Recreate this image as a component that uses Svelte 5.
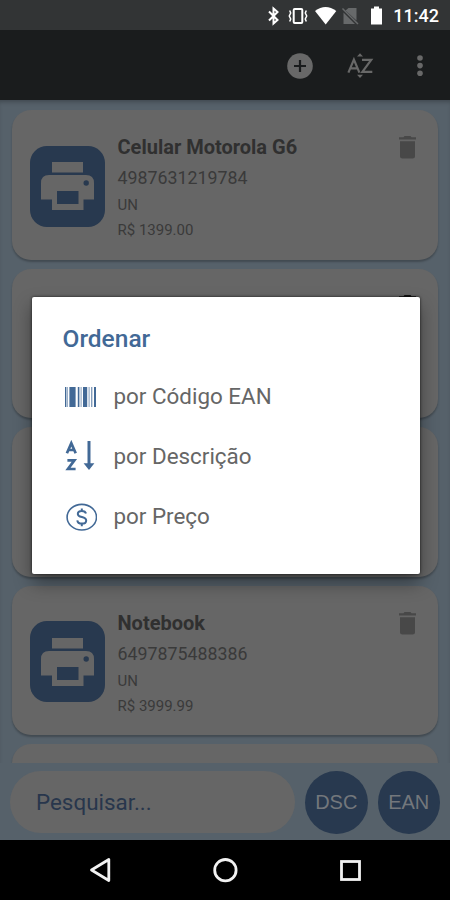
<script>
  const products = [
    { name: "Celular Motorola G6", ean: "4987631219784", unit: "UN", price: 1399 },
    { active: true },
    { active: true },
    { name: "Notebook", ean: "6497875488386", unit: "UN", price: 3999.99 },
    {},
  ];
  const options = [
    { icon: "ean", label: "por Código EAN" },
    { icon: "az", label: "por Descrição" },
    { icon: "price", label: "por Preço" },
  ];
  const brl = (v) => "R$ " + v.toFixed(2);
</script>

<div class="screen">
  <div class="status">
    <svg width="118" height="30" viewBox="0 0 118 30">
      <g fill="none" stroke="#fff" stroke-width="2">
        <path d="M2 11.5L10.5 20L6.5 23.5V8.5L10.5 12L2 20.5" />
        <rect x="26.7" y="9" width="8.6" height="14" rx="1" />
        <path d="M22.7 10.5L23.7 13L22.3 16L23.7 19L22.7 21.5M39.3 10.5L38.3 13L39.7 16L38.3 19L39.3 21.5" stroke-width="1.5" />
      </g>
      <path d="M48 11Q58.5 3 69.3 11L58.7 24.5Z" fill="#fff" />
      <path d="M81.5 8H89.5V20.5L78.5 10.5ZM76.5 12.5L88 24H76.5Z" fill="#67696a" />
      <path d="M75.5 8.5L91 24" stroke="#67696a" stroke-width="1.5" />
      <path d="M107 6.5H112V8.5H115V24.5H104V8.5H107Z" fill="#fff" />
    </svg>
    <span class="clock">11:42</span>
  </div>

  <div class="appbar">
    <svg width="28" height="28" viewBox="0 0 28 28">
      <circle cx="14" cy="14" r="12.8" fill="#686868" />
      <path d="M14 8V20M8 14H20" stroke="#1a1c1d" stroke-width="2.2" />
    </svg>
    <svg class="sort" width="28" height="28" viewBox="0 0 28 28">
      <path d="M11 4.4L14 1.2L17 4.4ZM11 22.7L14 25.9L17 22.7Z" fill="#686868" />
      <path d="M2.4 20.6L7.9 7.6L13.4 20.6M4 16.4H11.6M16 7.9H25.2L16.4 19.8H26.3" fill="none" stroke="#686868" stroke-width="2.2" />
    </svg>
    <svg class="more" width="8" height="24" viewBox="0 0 8 24">
      <g fill="#686868"><circle cx="4" cy="4" r="2.8" /><circle cx="4" cy="11.6" r="2.8" /><circle cx="4" cy="19.2" r="2.8" /></g>
    </svg>
  </div>

  <div class="list">
    {#each products as p}
      <div class="card">
        {#if p.name}
          <div class="thumb">
            <svg width="53" height="48" viewBox="0 0 53 48">
              <path d="M11 0H42V10.5H11Z" fill="#666" />
              <path d="M8 13H45Q53 13 53 21V37.5H42.5V48H11V37.5H0V21Q0 13 8 13Z" fill="#666" />
              <rect x="16" y="29" width="21.5" height="13" fill="#28394f" />
              <circle cx="45.2" cy="21" r="2.7" fill="#28394f" />
            </svg>
          </div>
          <div class="info">
            <div class="name">{p.name}</div>
            <div class="ean">{p.ean}</div>
            <div class="unit">{p.unit}</div>
            <div class="price">{brl(p.price)}</div>
          </div>
        {/if}
        {#if p.name || p.active}
          <svg class="trash" class:active={p.active} width="17" height="23" viewBox="0 0 17 23">
            <path d="M0 1.2H4.5L5.5 0H11.5L12.5 1.2H17V3.6H0ZM1 5.2H16V20Q16 22.5 13.5 22.5H3.5Q1 22.5 1 20Z" />
          </svg>
        {/if}
      </div>
    {/each}
  </div>

  <div class="search">
    <div class="field">Pesquisar...</div>
    <div class="round">DSC</div>
    <div class="round">EAN</div>
  </div>

  <div class="nav">
    <svg width="22" height="26" viewBox="0 0 22 26"><path d="M2.5 13L19.8 2.5V23.5Z" fill="none" stroke="#f2f2f2" stroke-width="2.8" stroke-linejoin="round" /></svg>
    <svg width="26" height="26" viewBox="0 0 26 26"><circle cx="13.4" cy="13.2" r="10.7" fill="none" stroke="#f2f2f2" stroke-width="2.8" /></svg>
    <svg width="22" height="26" viewBox="0 0 22 26"><rect x="2.5" y="4.5" width="18" height="18" fill="none" stroke="#f2f2f2" stroke-width="2.8" /></svg>
  </div>

  <div class="dialog">
    <h2>Ordenar</h2>
    {#each options as o}
      <div class="option">
        {#if o.icon === "ean"}
          <svg width="34" height="34" viewBox="0 0 34 34" fill="#426996">
            <path d="M2 7H3.4V27H2ZM6.4 7H12.6V27H6.4ZM14.8 7H16.4V27H14.8ZM20 7H24.2V27H20ZM31 7H33V27H31Z" />
            <path d="M4.2 7H5V27H4.2ZM17.6 7H18.6V27H17.6ZM25.6 7H26.6V27H25.6ZM28 7H29.4V27H28Z" opacity=".65" />
          </svg>
        {:else if o.icon === "az"}
          <svg width="34" height="34" viewBox="0 0 34 34" fill="none" stroke="#426996">
            <path d="M3.9 13.2L8.3 3.2L12.7 13.2M5.5 10H11.1M4.4 20.3H11.4L5 29H12.6" stroke-width="2.7" />
            <path d="M26 1V27" stroke-width="3" />
            <path d="M20.6 23.2H31.4L26 30Z" fill="#426996" stroke="none" />
          </svg>
        {:else}
          <svg width="34" height="34" viewBox="0 0 34 34" fill="none" stroke="#426996">
            <ellipse cx="18.8" cy="17.2" rx="14.7" ry="12.8" stroke-width="1.6" />
            <path d="M23 13.6C22.5 11.6 21 10.9 18.8 10.9C16.4 10.9 14.8 12.1 14.8 13.9C14.8 18.2 23.2 15.8 23.2 20.4C23.2 22.3 21.4 23.6 18.9 23.6C16.3 23.6 14.5 22.3 14.3 20.3M18.8 8.5V10.9M18.8 23.6V26.2" stroke-width="2" />
          </svg>
        {/if}
        <span>{o.label}</span>
      </div>
    {/each}
  </div>
</div>

<style>
  :global(body) { margin: 0; background: #000; }
  .screen { position: relative; display: flex; flex-direction: column; width: 450px; height: 900px; overflow: hidden; background: #56616a; font-family: Roboto, sans-serif; }
  svg { display: block; flex: none; }

  .status { display: flex; align-items: center; justify-content: flex-end; height: 30px; flex: none; box-sizing: border-box; padding-right: 11px; background: #323435; }
  .clock { width: 46px; margin-left: 8px; color: #fff; font-size: 18px; font-weight: 500; line-height: 30px; padding-top: 1px; text-align: right; white-space: nowrap; }
  .appbar { display: flex; align-items: center; justify-content: flex-end; height: 70px; flex: none; box-sizing: border-box; padding: 1px 26px 0 0; background: #1a1c1d; }
  .sort { margin-left: 32px; }
  .more { margin-left: 42px; }

  .list { height: 663px; flex: none; box-sizing: border-box; padding: 10px 12px 0; overflow: hidden; box-shadow: inset 0 4px 4px -2px rgba(0, 0, 0, .25); }
  .card { display: flex; height: 149.5px; box-sizing: border-box; margin-bottom: 9px; padding: 0 22px 0 18px; border-radius: 19px; background: #666; box-shadow: 0 2px 2px rgba(0, 0, 0, .24); }
  .thumb { display: flex; align-items: center; justify-content: center; width: 75px; height: 81px; margin-top: 35.5px; border-radius: 17px; background: #28394f; }
  .info { margin-left: 12.5px; padding-top: 24px; color: #3a3a3a; white-space: nowrap; }
  .name { font-size: 20px; font-weight: 700; line-height: 27px; color: #303030; }
  .ean { font-size: 17.8px; line-height: 34px; }
  .unit { font-size: 15px; line-height: 20px; }
  .price { font-size: 15px; line-height: 31px; }
  .trash { margin: 26px 0 0 auto; fill: #484848; }
  .trash.active { fill: #111; }

  .search { display: flex; align-items: flex-start; height: 77px; flex: none; box-sizing: border-box; padding: 8px 10px 0; gap: 10px; }
  .field { width: 285px; height: 62px; box-sizing: border-box; padding-left: 26px; border-radius: 31px; background: #666; color: #28364c; font-size: 22.4px; line-height: 63px; }
  .round { width: 62.5px; height: 63px; border-radius: 50%; background: #28394f; color: #73777c; font-family: "Liberation Sans", sans-serif; font-size: 20px; line-height: 63px; text-align: center; }
  .nav { display: flex; align-items: center; justify-content: space-between; height: 60px; flex: none; box-sizing: border-box; padding: 0 89px; background: #000; }

  .dialog { position: absolute; left: 31.5px; top: 297px; width: 388px; height: 276.5px; box-sizing: border-box; padding: 25px 31px 0; border-radius: 2px; background: #fff; box-shadow: 0 9px 18px rgba(0, 0, 0, .4), 0 0 3px rgba(0, 0, 0, .7); }
  h2 { margin: 0 0 17px; color: #426996; font-size: 24.5px; font-weight: 500; line-height: 33px; }
  .option { display: flex; align-items: center; height: 50px; margin-bottom: 10px; }
  .option span { margin-left: 17px; padding-bottom: 2px; color: #666; font-size: 22.4px; font-weight: 400; line-height: 48px; white-space: nowrap; }
</style>
